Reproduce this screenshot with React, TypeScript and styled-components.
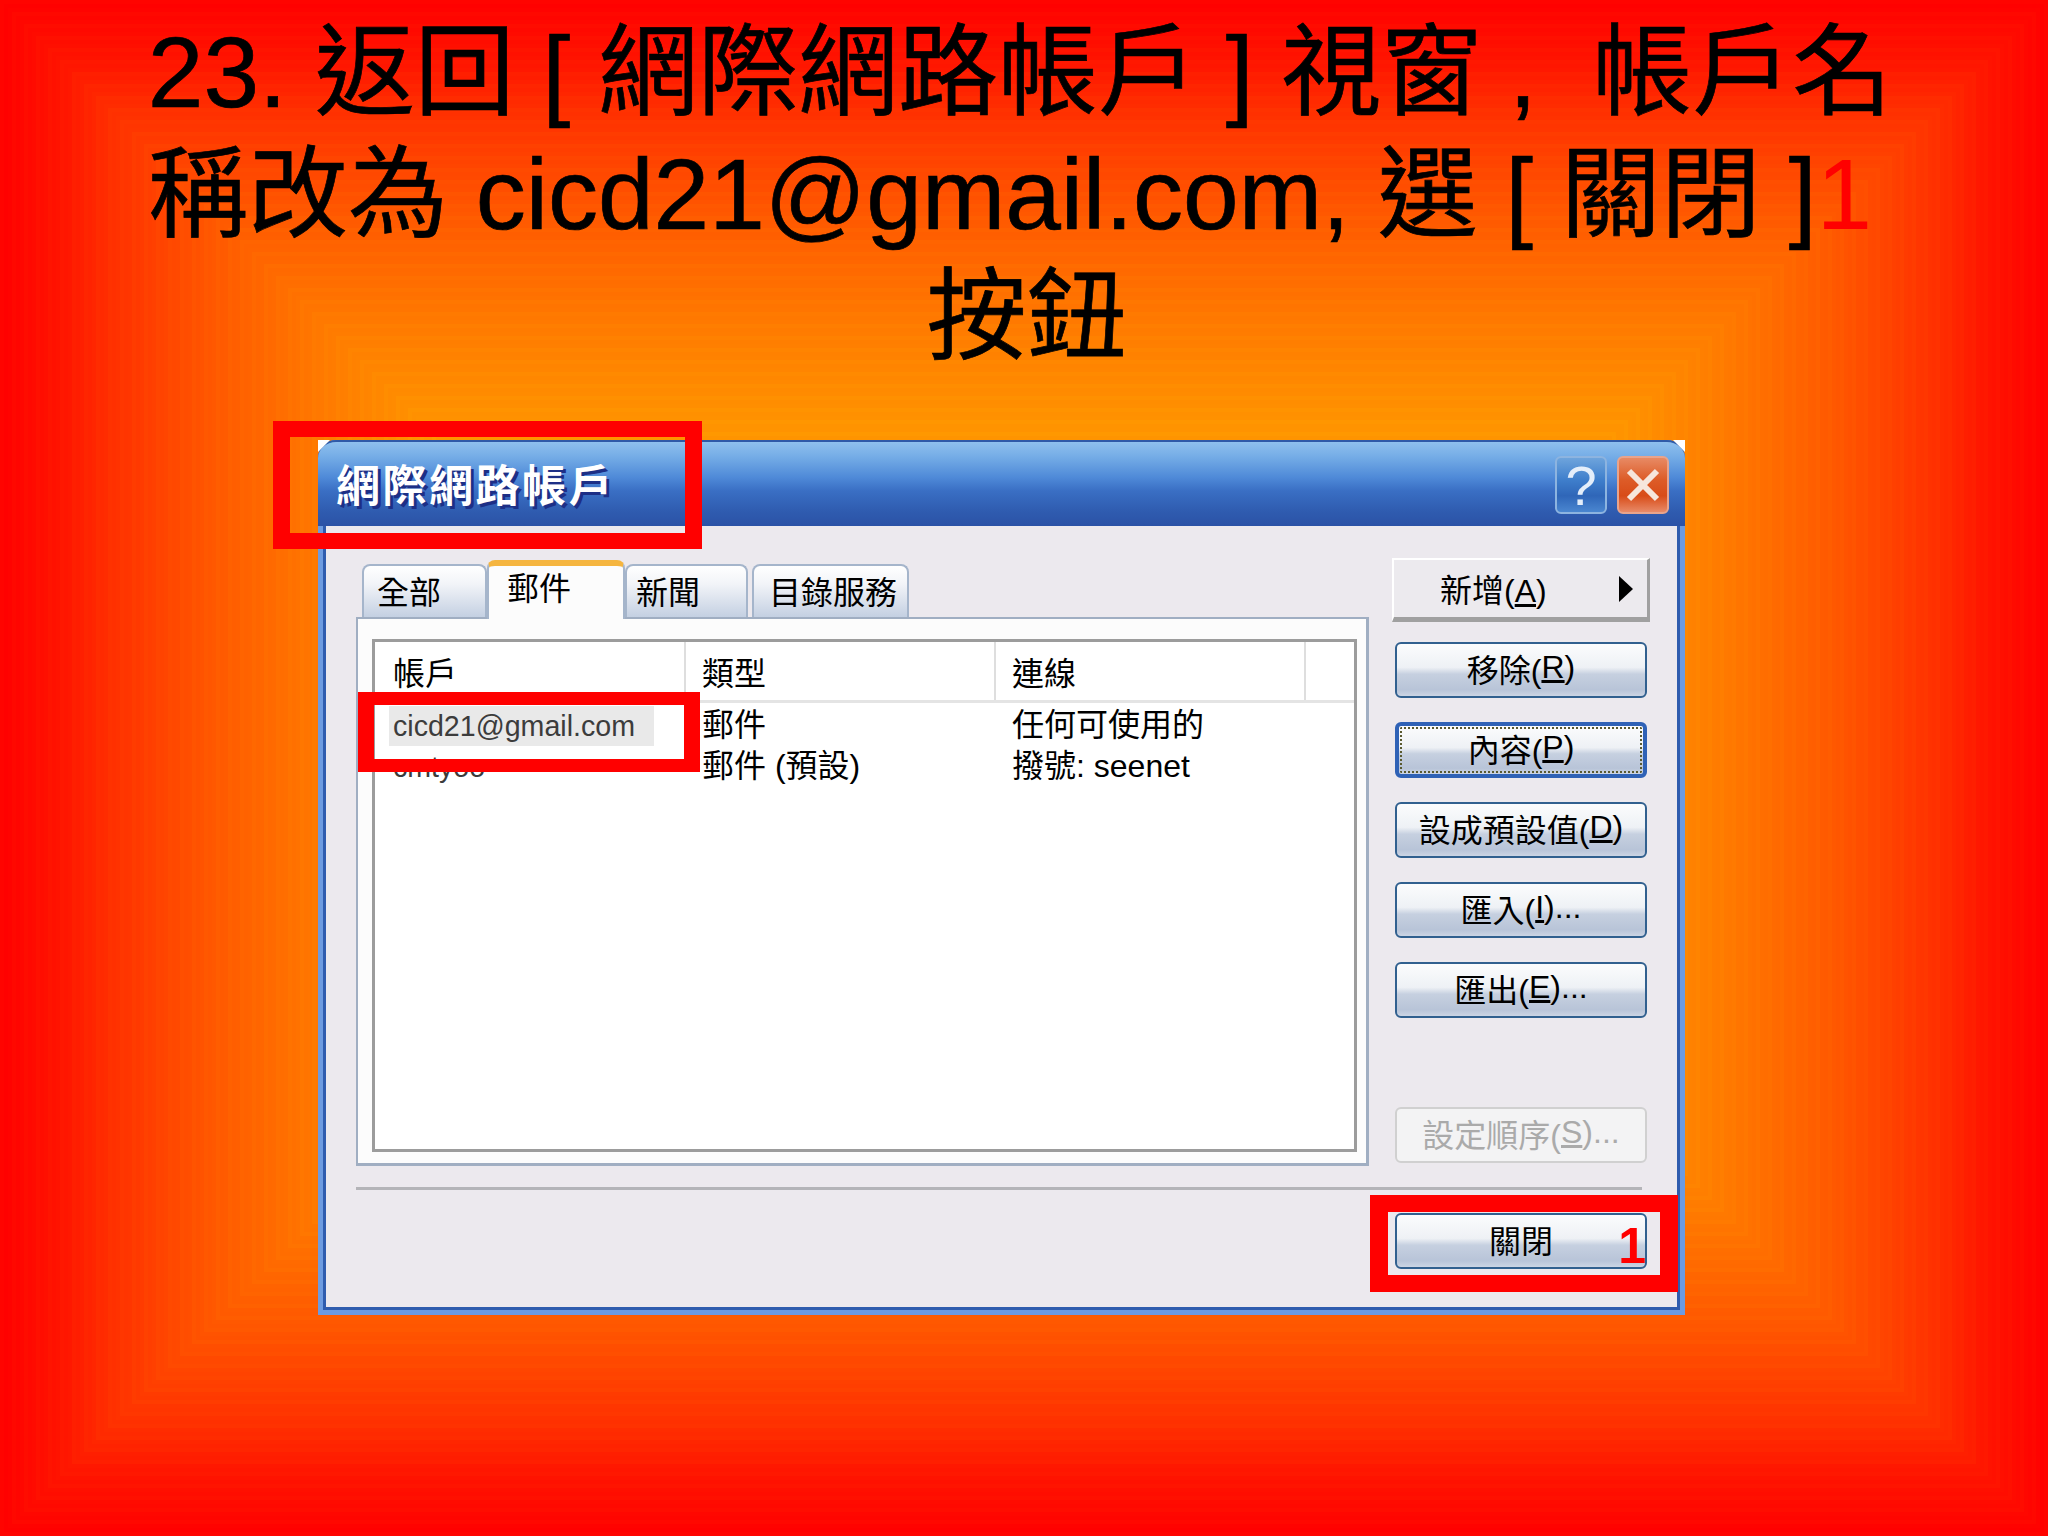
import React from 'react'
import styled, { createGlobalStyle } from 'styled-components'

const GlobalStyle = createGlobalStyle`
  html, body {
    margin: 0;
    padding: 0;
    background: #ff0000;
  }
  * {
    box-sizing: border-box;
  }
`

// green channel of the slide's red-to-orange fill, by distance from the edge
const greenAt = (d: number) => {
  const pts = [
    [0, 0],
    [60, 20],
    [107, 46],
    [213, 88],
    [317, 120],
    [420, 146],
    [768, 190],
  ]
  for (let i = 1; i < pts.length; i++) {
    if (d <= pts[i][0]) {
      const [x0, y0] = pts[i - 1]
      const [x1, y1] = pts[i]
      return y0 + ((y1 - y0) * (d - x0)) / (x1 - x0)
    }
  }
  return 190
}

// the fill is banded in the reference, so build it from hard stops
const bands = (() => {
  const stops: string[] = []
  const step = 4
  for (let d = 0, i = 0; d < 768; d += step, i++) {
    const g = Math.round(greenAt(d) + (i % 3 === 0 ? 4 : 0))
    stops.push(`rgb(255,${g},0) ${d}px ${d + step}px`)
  }
  return stops.join(',')
})()

const Slide = styled.div`
  position: relative;
  width: 2048px;
  height: 1536px;
  overflow: hidden;
  font-family: 'Liberation Sans', 'Noto Sans CJK TC', sans-serif;
  background:
    linear-gradient(to bottom, ${bands}) top / 100% 768px no-repeat,
    linear-gradient(to top, ${bands}) bottom / 100% 768px no-repeat;
`

const SideFill = styled.div<{ $right?: boolean }>`
  position: absolute;
  inset: 0;
  background: linear-gradient(to ${p => (p.$right ? 'left' : 'right')}, ${bands});
  clip-path: ${p =>
    p.$right
      ? 'polygon(100% 0, 100% 100%, 1280px 768px)'
      : 'polygon(0 0, 0 100%, 768px 768px)'};
`

const Content = styled.div`
  position: relative;
  display: flex;
  flex-direction: column;
  height: 100%;
`

const Title = styled.h1`
  margin: 0;
  padding-top: 11px;
  height: 440px;
  font-size: 100px;
  line-height: 122px;
  font-weight: 400;
  color: #000;
  -webkit-text-stroke: 0.7px #000;
  text-align: center;
  white-space: nowrap;
`

const TitleLine = styled.div<{ $pl?: number; $pr?: number }>`
  padding-left: ${p => p.$pl ?? 0}px;
  padding-right: ${p => p.$pr ?? 0}px;
`

const WideComma = styled.span`
  display: inline-block;
  width: 83px;
  text-align: center;
`

const RedDigit = styled.span`
  color: #ff0000;
  -webkit-text-stroke: 0;
`

const Dialog = styled.div`
  position: relative;
  margin-left: 318px;
  width: 1367px;
  height: 875px;
  display: flex;
  flex-direction: column;
  background: #6d9be0;
  border-radius: 18px 18px 0 0;
`

const TitleBar = styled.div`
  position: relative;
  height: 86px;
  flex: none;
  display: flex;
  align-items: center;
  justify-content: space-between;
  padding: 2px 16px 0 18px;
  border-top: 2px solid #2f5aa8;
  border-radius: 18px 18px 0 0;
  background: linear-gradient(
    to bottom,
    #8fc0ee 0%,
    #74ace6 18%,
    #4f8ad8 42%,
    #3a6fc4 58%,
    #2f5cb0 82%,
    #2b52a6 100%
  );
`

const Corner = styled.span<{ $right?: boolean }>`
  position: absolute;
  top: -2px;
  ${p => (p.$right ? 'right: 0;' : 'left: 0;')}
  width: 12px;
  height: 12px;
  background: #fff;
  clip-path: ${p =>
    p.$right ? 'polygon(0 0, 100% 0, 100% 100%)' : 'polygon(0 0, 100% 0, 0 100%)'};
`

const Caption = styled.span`
  margin-top: 4px;
  font-size: 44px;
  line-height: 50px;
  font-weight: 700;
  color: #fff;
  letter-spacing: 2.5px;
  text-shadow: 3px 3px 0 #1d2f86;
`

const CaptionButtons = styled.div`
  display: flex;
  gap: 10px;
`

const CaptionButton = styled.div<{ $close?: boolean }>`
  width: 52px;
  height: 58px;
  display: flex;
  align-items: center;
  justify-content: center;
  border: 2px solid ${p => (p.$close ? '#e8a48c' : '#8db4e0')};
  border-radius: 6px;
  color: #e4eefa;
  font-size: 56px;
  font-weight: 400;
  background: ${p =>
    p.$close
      ? 'linear-gradient(to bottom, #e88a64 0%, #dd5c28 40%, #d84c18 70%, #e88a68 100%)'
      : 'linear-gradient(to bottom, #6ea4dc 0%, #3f7fcc 40%, #2f66b8 70%, #4a86d0 100%)'};
`

const Body = styled.div`
  flex: 1;
  margin: 0 5px 5px;
  padding: 32px 27px 0 30px;
  display: flex;
  flex-direction: column;
  background: #ece9ee;
  border: 3px solid #2f5cae;
  border-top: none;
  font-size: 32px;
  color: #000;
`

const Main = styled.div`
  display: flex;
  gap: 23px;
`

const LeftColumn = styled.div`
  width: 1013px;
  display: flex;
  flex-direction: column;
`

const TabRow = styled.div`
  height: 59px;
  padding-left: 6px;
  display: flex;
  align-items: flex-end;
`

const Tab = styled.div<{ $w: number; $pad: number; $active?: boolean; $gap?: number }>`
  width: ${p => p.$w}px;
  height: ${p => (p.$active ? 59 : 53)}px;
  margin-right: ${p => p.$gap ?? 0}px;
  margin-bottom: ${p => (p.$active ? -2 : 0)}px;
  position: relative;
  z-index: ${p => (p.$active ? 1 : 0)};
  padding-top: ${p => (p.$active ? 3 : 7)}px;
  padding-left: ${p => p.$pad}px;
  line-height: 40px;
  border: 2px solid #a5b5cb;
  border-bottom: none;
  border-radius: 8px 8px 0 0;
  border-top: ${p => (p.$active ? '6px solid #f5b53f' : '2px solid #a5b5cb')};
  background: ${p =>
    p.$active ? '#fcfcfc' : 'linear-gradient(to bottom, #ffffff 0%, #f2f4f8 35%, #c4d0e2 100%)'};
`

const Panel = styled.div`
  height: 549px;
  padding: 20px 9px 11px 14px;
  background: #fcfcfc;
  border: 2px solid #a0aec2;
  border-right-width: 3px;
  border-bottom-width: 3px;
`

const ListBox = styled.div`
  height: 100%;
  background: #fff;
  border: 3px solid #9c9c9c;
`

const HeaderRow = styled.div`
  display: grid;
  grid-template-columns: 311px 310px 310px 1fr;
  height: 61px;
  border-bottom: 3px solid #e4e4e4;
`

const HeaderCell = styled.div<{ $first?: boolean }>`
  padding: 14px 0 0 ${p => (p.$first ? 18 : 16)}px;
  line-height: 36px;
  border-right: 2px solid #dedede;
`

const ListRow = styled.div`
  display: grid;
  grid-template-columns: 311px 310px 310px;
  height: 41px;
  padding-top: 3px;
  line-height: 38px;
`

const ListCell = styled.div<{ $first?: boolean }>`
  padding-left: ${p => (p.$first ? 18 : 16)}px;
  white-space: nowrap;
`

const Account = styled.span<{ $selected?: boolean }>`
  display: block;
  font-size: 28.6px;
  line-height: 40px;
  color: #3c3c3c;
  ${p =>
    p.$selected
      ? `
    width: 265px;
    margin-left: -4px;
    padding-left: 4px;
    background: #e9e9e9;
  `
      : ''}
`

const RightColumn = styled.div`
  width: 258px;
  display: flex;
  flex-direction: column;
  align-items: center;
`

const ActionButton = styled.div<{
  $default?: boolean
  $disabled?: boolean
  $top?: number
  $bottom?: number
  $right?: number
}>`
  position: relative;
  width: 252px;
  height: 56px;
  margin: ${p => p.$top ?? 24}px ${p => p.$right ?? 0}px ${p => p.$bottom ?? 0}px 0;
  padding-bottom: 5px;
  flex: none;
  display: flex;
  align-items: center;
  justify-content: center;
  white-space: nowrap;
  border-radius: 6px;
  border: ${p =>
    p.$default ? '4px solid #2f62b6' : p.$disabled ? '2px solid #d0d0d0' : '2px solid #31608f'};
  color: ${p => (p.$disabled ? '#aaaaaa' : '#000')};
  background: ${p =>
    p.$disabled
      ? '#f3f3f4'
      : 'linear-gradient(to bottom, #fbfcfd 0%, #eef1f5 45%, #c6d0e0 58%, #b8c4d8 88%, #ccd5e4 100%)'};
`

const FocusRing = styled.span`
  position: absolute;
  inset: 1px;
  border: 2px dotted #5a5a30;
  border-radius: 2px;
`

const MenuButton = styled.div`
  width: 258px;
  height: 64px;
  flex: none;
  display: flex;
  align-items: center;
  justify-content: space-between;
  padding: 0 14px 2px 46px;
  background: #eceaee;
  border-top: 2px solid #fff;
  border-left: 2px solid #fff;
  border-right: 3px solid #a0a0a0;
  border-bottom: 5px solid #a0a0a0;
`

const MenuArrow = styled.span`
  width: 0;
  height: 0;
  margin-top: 2px;
  border-left: 14px solid #000;
  border-top: 13px solid transparent;
  border-bottom: 13px solid transparent;
`

const Spacer = styled.div`
  flex: 1;
`

const Separator = styled.div`
  margin: 21px 8px 0 0;
  height: 3px;
  background: #b4b4b8;
`

const Footer = styled.div`
  display: flex;
  justify-content: flex-end;
  margin-top: -1px;
`

const Mark = styled.span`
  position: absolute;
  right: -1px;
  bottom: -4px;
  font-size: 50px;
  line-height: 50px;
  font-weight: 700;
  color: #ff0000;
`

const RedBox = styled.div<{
  $left: number
  $top: number
  $w: number
  $h: number
  $bx: number
  $by: number
}>`
  position: absolute;
  left: ${p => p.$left}px;
  top: ${p => p.$top}px;
  width: ${p => p.$w}px;
  height: ${p => p.$h}px;
  border-style: solid;
  border-color: #ff0000;
  border-width: ${p => p.$by}px ${p => p.$bx}px;
  pointer-events: none;
`

function App() {
  return (
    <Slide>
      <GlobalStyle />
      <SideFill />
      <SideFill $right />
      <Content>
        <Title>
          <TitleLine $pr={8}>
            23. 返回 [ 網際網路帳戶 ] 視窗<WideComma>,</WideComma> 帳戶名
          </TitleLine>
          <TitleLine $pr={28}>
            稱改為 cicd21@gmail.com, 選 [ 關閉 ]<RedDigit>1</RedDigit>
          </TitleLine>
          <TitleLine $pl={5}>按鈕</TitleLine>
        </Title>
        <Dialog>
          <TitleBar>
            <Corner />
            <Corner $right />
            <Caption>網際網路帳戶</Caption>
            <CaptionButtons>
              <CaptionButton>?</CaptionButton>
              <CaptionButton $close>
                <svg width="36" height="36" viewBox="0 0 36 36">
                  <path d="M4 4 L32 32 M32 4 L4 32" stroke="#f6e6dc" strokeWidth="6" />
                </svg>
              </CaptionButton>
            </CaptionButtons>
          </TitleBar>
          <Body>
            <Main>
              <LeftColumn>
                <TabRow>
                  <Tab $w={125} $pad={13}>全部</Tab>
                  <Tab $w={138} $pad={18} $active>郵件</Tab>
                  <Tab $w={123} $pad={9} $gap={4}>新聞</Tab>
                  <Tab $w={157} $pad={15}>目錄服務</Tab>
                </TabRow>
                <Panel>
                  <ListBox>
                    <HeaderRow>
                      <HeaderCell $first>帳戶</HeaderCell>
                      <HeaderCell>類型</HeaderCell>
                      <HeaderCell>連線</HeaderCell>
                      <div />
                    </HeaderRow>
                    <ListRow>
                      <ListCell $first>
                        <Account $selected>cicd21@gmail.com</Account>
                      </ListCell>
                      <ListCell>郵件</ListCell>
                      <ListCell>任何可使用的</ListCell>
                    </ListRow>
                    <ListRow>
                      <ListCell $first>
                        <Account>cmtyoo</Account>
                      </ListCell>
                      <ListCell>郵件 (預設)</ListCell>
                      <ListCell>撥號: seenet</ListCell>
                    </ListRow>
                  </ListBox>
                </Panel>
              </LeftColumn>
              <RightColumn>
                <MenuButton>
                  <span>新增(<u>A</u>)</span>
                  <MenuArrow />
                </MenuButton>
                <ActionButton $top={20}>移除(<u>R</u>)</ActionButton>
                <ActionButton $default>
                  <FocusRing />
                  內容(<u>P</u>)
                </ActionButton>
                <ActionButton>設成預設值(<u>D</u>)</ActionButton>
                <ActionButton>匯入(<u>I</u>)...</ActionButton>
                <ActionButton>匯出(<u>E</u>)...</ActionButton>
                <Spacer />
                <ActionButton $disabled $bottom={3}>設定順序(<u>S</u>)...</ActionButton>
              </RightColumn>
            </Main>
            <Separator />
            <Footer>
              <ActionButton $right={3}>
                關閉
                <Mark>1</Mark>
              </ActionButton>
            </Footer>
          </Body>
          <RedBox $left={-45} $top={-19} $w={429} $h={128} $bx={17} $by={16} />
          <RedBox $left={40} $top={252} $w={342} $h={80} $bx={16} $by={13} />
          <RedBox $left={1052} $top={755} $w={308} $h={97} $bx={18} $by={17} />
        </Dialog>
      </Content>
    </Slide>
  )
}

export default App
